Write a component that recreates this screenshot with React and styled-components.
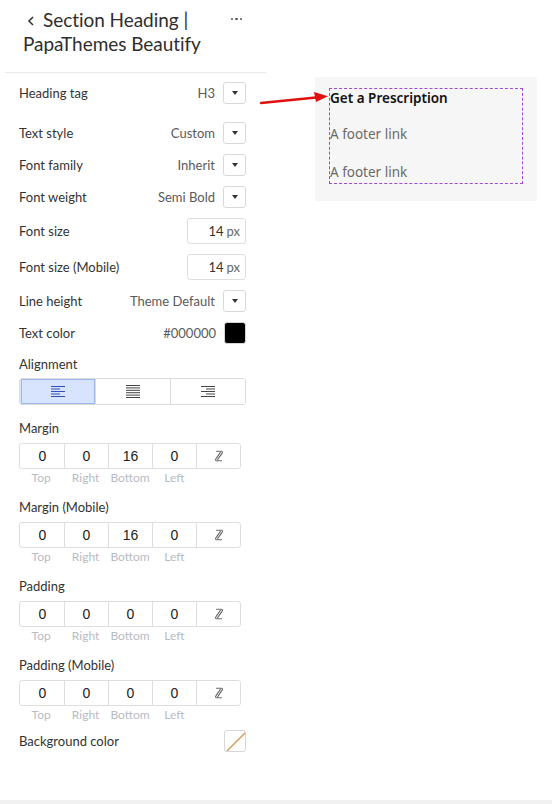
import React from "react";
import styled, { createGlobalStyle } from "styled-components";

const GlobalStyle = createGlobalStyle`
  html, body {
    margin: 0;
    padding: 0;
    background: #ffffff;
  }
  body {
    font-family: "Lato", "Open Sans", sans-serif;
    color: #303030;
  }
  * { box-sizing: border-box; }
`;

const Page = styled.div`
  position: relative;
  width: 552px;
  height: 804px;
  display: flex;
  flex-direction: column;
`;

const Main = styled.div`
  flex: 1;
  display: flex;
`;

const BottomBand = styled.div`
  height: 4px;
  background: #f1f1f1;
`;

const Sidebar = styled.aside`
  width: 261px;
  margin-left: 5px;
  display: flex;
  flex-direction: column;
`;

const Header = styled.div`
  display: flex;
  align-items: flex-start;
  padding: 8px 20px 16px 18px;
  border-bottom: 1px solid #e9e9e9;
`;

const Title = styled.h1`
  flex: 1;
  margin: 0;
  font-size: 19px;
  font-weight: 400;
  line-height: 24px;
  color: #2e2e2e;
  letter-spacing: -0.05px;
`;

const TitleLine = styled.span`
  display: block;
`;

const Dots = styled.span`
  height: 22px;
  display: flex;
  align-items: center;
  gap: 2px;
  margin-right: 4px;
`;

const Dot = styled.i`
  width: 2.5px;
  height: 2.5px;
  border-radius: 50%;
  background: #555;
`;

const Body = styled.div`
  padding: 9px 20px 0 14px;
  display: flex;
  flex-direction: column;
`;

const Row = styled.div`
  display: flex;
  align-items: center;
  justify-content: space-between;
  margin-bottom: ${(p) => p.gap ?? 10}px;
`;

const Label = styled.span`
  font-size: 13px;
  color: #333;
`;

const Control = styled.div`
  display: flex;
  align-items: center;
  gap: 8px;
`;

const Value = styled.span`
  font-size: 13px;
  color: #5a5a5a;
`;

const SelectBox = styled.span`
  width: 23px;
  height: 22px;
  border: 1px solid #d9d9d9;
  border-radius: 3px;
  display: flex;
  align-items: center;
  justify-content: center;
  &::after {
    content: "";
    border-left: 3.5px solid transparent;
    border-right: 3.5px solid transparent;
    border-top: 4px solid #333;
  }
`;

const NumberBox = styled.span`
  width: 59px;
  height: 26px;
  border: 1px solid #dedede;
  border-radius: 3px;
  display: flex;
  align-items: center;
  justify-content: flex-end;
  padding-right: 5px;
  font-size: 13px;
  color: #333;
  gap: 3px;
`;

const Unit = styled.span`
  color: #666;
`;

const Swatch = styled.span`
  width: 22px;
  height: 22px;
  border-radius: 3px;
  border: 1px solid #d6d6d6;
  background: ${(p) => p.color || "#fff"};
  overflow: hidden;
  display: block;
`;

const SectionLabel = styled.div`
  font-size: 13px;
  line-height: 16px;
  color: #333;
  margin-bottom: ${(p) => p.gap ?? 7}px;
`;

const Segmented = styled.div`
  display: grid;
  grid-template-columns: repeat(3, 1fr);
  height: 27px;
  border: 1px solid #dcdcdc;
  border-radius: 3px;
  margin-bottom: 15px;
  overflow: hidden;
`;

const Segment = styled.span`
  display: flex;
  align-items: center;
  justify-content: center;
  background: ${(p) => (p.active ? "#d8e4fd" : "#fff")};
  border-left: 1px solid ${(p) => (p.first ? "transparent" : "#dcdcdc")};
  box-shadow: ${(p) => (p.active ? "inset 0 0 0 1px #9db7ee" : "none")};
  color: ${(p) => (p.active ? "#2f4fb8" : "#444")};
`;

const Group = styled.div`
  margin-bottom: ${(p) => (p.last ? 7 : 13)}px;
`;

const SpacingGrid = styled.div`
  display: grid;
  grid-template-columns: repeat(5, 1fr);
  width: 222px;
`;

const Cells = styled(SpacingGrid)`
  height: 26px;
  border: 1px solid #dedede;
  border-radius: 3px;
`;

const Cell = styled.span`
  display: flex;
  align-items: center;
  justify-content: center;
  font-family: "Liberation Sans", Arial, sans-serif;
  font-size: 14px;
  color: #222;
  border-left: 1px solid ${(p) => (p.first ? "transparent" : "#dedede")};
`;

const SubLabel = styled.span`
  text-align: center;
  font-size: 12px;
  line-height: 16px;
  color: #b7bbc3;
  margin-top: 1px;
`;

const Preview = styled.main`
  flex: 1;
  padding: 77px 15px 0 49px;
`;

const Canvas = styled.div`
  background: #f6f6f6;
  height: 124px;
  padding: 11px 14px 0 14px;
`;

const Outline = styled.div`
  border: 1px dashed #a04ad0;
  height: 96px;
  font-family: "Noto Sans", "Lato", sans-serif;
`;

const PreviewHeading = styled.h3`
  margin: 0;
  font-size: 13.5px;
  font-weight: 600;
  line-height: 18px;
  color: #111;
`;

const FooterLink = styled.p`
  margin: 17px 0 0;
  font-size: 13.5px;
  line-height: 21px;
  color: #6a6a6a;
  & + & {
    margin-top: 17px;
  }
`;

const Arrow = styled.svg`
  position: absolute;
  left: 258px;
  top: 90px;
`;

const LeftIcon = () => (
  <svg width="14" height="12" viewBox="0 0 14 12">
    {[0.5, 3, 5.5, 8, 10.5].map((y, i) => (
      <line key={i} x1="0" x2={i % 2 ? 9 : 14} y1={y} y2={y} stroke="currentColor" strokeWidth="1" />
    ))}
  </svg>
);

const JustifyIcon = () => (
  <svg width="14" height="13" viewBox="0 0 14 13">
    {[0.5, 2.9, 5.3, 7.7, 10.1, 12.5].map((y, i) => (
      <line key={i} x1="0" x2="14" y1={y} y2={y} stroke="currentColor" strokeWidth="1" />
    ))}
  </svg>
);

const RightIcon = () => (
  <svg width="14" height="12" viewBox="0 0 14 12">
    {[0.5, 3, 5.5, 8, 10.5].map((y, i) => (
      <line key={i} x1={i % 2 ? 5 : 0} x2="14" y1={y} y2={y} stroke="currentColor" strokeWidth="1" />
    ))}
  </svg>
);

// slanted broken-chain glyph used for the "link values" toggle
const LinkIcon = () => (
  <svg width="12" height="14" viewBox="0 0 12 14" fill="none" stroke="#6a6a6a" strokeWidth="1.1" strokeLinecap="round" strokeLinejoin="round">
    <path d="M3.5 2.2 H8.2 C9.6 2.2 9.8 3.4 9 4.4 L4.6 10.6" />
    <path d="M7.4 3.4 L3 9.6 C2.2 10.6 2.4 11.8 3.8 11.8 H8.5" />
  </svg>
);

const SpacingGroup = ({ label, values, last }) => (
  <Group last={last}>
    <SectionLabel>{label}</SectionLabel>
    <Cells>
      {values.map((v, i) => (
        <Cell key={i} first={i === 0}>{v}</Cell>
      ))}
      <Cell>
        <LinkIcon />
      </Cell>
    </Cells>
    <SpacingGrid>
      {["Top", "Right", "Bottom", "Left"].map((s) => (
        <SubLabel key={s}>{s}</SubLabel>
      ))}
    </SpacingGrid>
  </Group>
);

const selects = [
  { label: "Text style", value: "Custom" },
  { label: "Font family", value: "Inherit" },
  { label: "Font weight", value: "Semi Bold" },
];

export default function App() {
  return (
    <Page>
      <GlobalStyle />
      <Main>
        <Sidebar>
          <Header>
            <Title>
              <TitleLine>
                <svg width="20" height="14" viewBox="0 0 20 14" style={{ verticalAlign: "-1px" }}>
                  <path d="M10 3 L6 7 L10 11" fill="none" stroke="#333" strokeWidth="1.6" />
                </svg>
                Section Heading |
              </TitleLine>
              <TitleLine>PapaThemes Beautify</TitleLine>
            </Title>
            <Dots>
              <Dot />
              <Dot />
              <Dot />
            </Dots>
          </Header>

          <Body>
            <Row gap={18}>
              <Label>Heading tag</Label>
              <Control>
                <Value>H3</Value>
                <SelectBox />
              </Control>
            </Row>

            {selects.map((s) => (
              <Row key={s.label}>
                <Label>{s.label}</Label>
                <Control>
                  <Value>{s.value}</Value>
                  <SelectBox />
                </Control>
              </Row>
            ))}

            <Row>
              <Label>Font size</Label>
              <NumberBox>
                14 <Unit>px</Unit>
              </NumberBox>
            </Row>
            <Row>
              <Label>Font size (Mobile)</Label>
              <NumberBox>
                14 <Unit>px</Unit>
              </NumberBox>
            </Row>
            <Row>
              <Label>Line height</Label>
              <Control>
                <Value>Theme Default</Value>
                <SelectBox />
              </Control>
            </Row>
            <Row gap={12}>
              <Label>Text color</Label>
              <Control>
                <Value>#000000</Value>
                <Swatch color="#000" />
              </Control>
            </Row>

            <SectionLabel gap={6}>Alignment</SectionLabel>
            <Segmented>
              <Segment active first>
                <LeftIcon />
              </Segment>
              <Segment>
                <JustifyIcon />
              </Segment>
              <Segment>
                <RightIcon />
              </Segment>
            </Segmented>

            <SpacingGroup label="Margin" values={["0", "0", "16", "0"]} />
            <SpacingGroup label="Margin (Mobile)" values={["0", "0", "16", "0"]} />
            <SpacingGroup label="Padding" values={["0", "0", "0", "0"]} />
            <SpacingGroup label="Padding (Mobile)" values={["0", "0", "0", "0"]} last />

            <Row>
              <Label>Background color</Label>
              <Swatch>
                <svg width="22" height="22" viewBox="0 0 22 22">
                  <line x1="0" y1="22" x2="22" y2="0" stroke="#d49a5a" strokeWidth="1.4" />
                </svg>
              </Swatch>
            </Row>
          </Body>
        </Sidebar>

        <Preview>
          <Canvas>
            <Outline>
              <PreviewHeading>Get a Prescription</PreviewHeading>
              <FooterLink>A footer link</FooterLink>
              <FooterLink>A footer link</FooterLink>
            </Outline>
          </Canvas>
        </Preview>
      </Main>
      <BottomBand />

      <Arrow width="74" height="20" viewBox="0 0 74 20">
        <path d="M3 13 L58 7.5" stroke="#e01010" strokeWidth="2.4" strokeLinecap="round" />
        <path d="M70 6.3 L56 2 L58 12 Z" fill="#e01010" />
      </Arrow>
    </Page>
  );
}
